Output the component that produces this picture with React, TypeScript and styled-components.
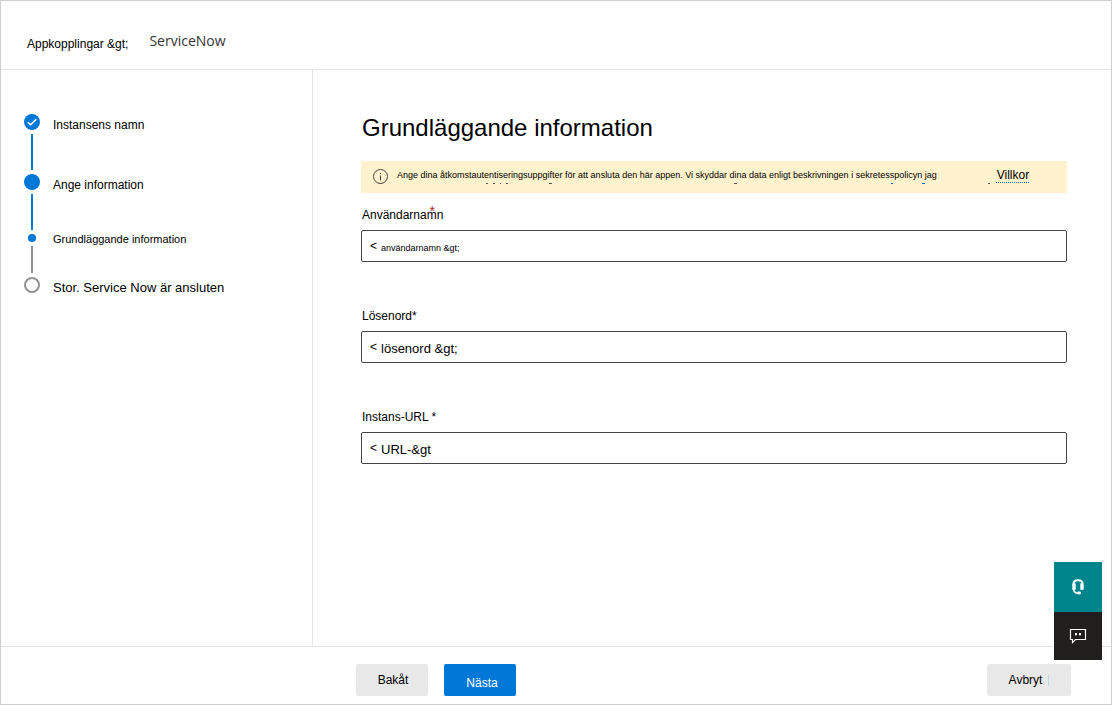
import React from "react";
import styled, { createGlobalStyle, css } from "styled-components";

const Global = createGlobalStyle`
  *, *::before, *::after { box-sizing: border-box; }
  body { margin: 0; background: #fff; color: #000; font: 12px/16px "Liberation Sans", Arial, sans-serif; }
  button, input { font: inherit; color: inherit; }
`;

const Page = styled.div`
  position: relative;
  min-height: 100vh;
  display: flex;
  flex-direction: column;
  border: 1px solid #cfcfcf;
`;

const Header = styled.header`
  border-bottom: 1px solid #e5e5e5;
  padding: 32px 26px 17px;
`;

const Breadcrumb = styled.nav`
  display: flex;
  align-items: flex-start;
  gap: 21px;
`;

const CrumbLink = styled.a`
  color: #000;
  text-decoration: none;
  padding-top: 3px;
`;

const Crumb = styled.span`
  color: #333;
  font: 14px/16px "Open Sans", "Noto Sans", sans-serif;
`;

const Body = styled.div`
  flex: 1;
  display: grid;
  grid-template-columns: 312px minmax(0, 1fr);
`;

const Sidebar = styled.aside`
  border-right: 1px solid #e5e5e5;
  padding: 44px 23px;
`;

const Steps = styled.ol`
  list-style: none;
  margin: 0;
  padding: 0;
`;

const Step = styled.li`
  display: grid;
  grid-template-columns: 16px 1fr;
  column-gap: 13px;
  justify-items: center;
`;

type MarkerKind = "done" | "current" | "dot" | "todo";

const Marker = styled.span<{ $kind: MarkerKind }>`
  display: flex;
  width: ${(p) => (p.$kind === "dot" ? 8 : 16)}px;
  height: ${(p) => (p.$kind === "dot" ? 8 : 16)}px;
  border-radius: 50%;
  ${(p) =>
    p.$kind === "todo"
      ? css`border: 2px solid #929292;`
      : css`background: #0078d7;`}
`;

const StepLabel = styled.span<{ $small?: boolean; $large?: boolean }>`
  justify-self: start;
  height: 0;
  line-height: ${(p) => (p.$small ? 10 : 22)}px;
  font-size: ${(p) => (p.$small ? 11 : p.$large ? 13 : 12)}px;
`;

const Connector = styled.span<{ $done: boolean; $short?: boolean }>`
  width: 2px;
  height: ${(p) => (p.$short ? 27 : 36)}px;
  margin: 4px 0;
  background: ${(p) => (p.$done ? "#0078d7" : "#929292")};
`;

const Main = styled.main`
  padding: 42px 44px 40px 48px;
`;

const Title = styled.h1`
  margin: 0 0 17px;
  padding-left: 1px;
  font-size: 24px;
  line-height: 32px;
  font-weight: 400;
`;

const Banner = styled.div`
  position: relative;
  display: flex;
  align-items: center;
  min-height: 32px;
  padding: 0 12px;
  margin-bottom: 14px;
  background: #fff2cc;
`;

const BannerText = styled.p`
  margin: 0 60px 4px 8px;
  font-size: 9px;
  line-height: 12px;
`;

const TermsLink = styled.a`
  color: #000;
  margin-bottom: 4px;
  text-decoration: underline dotted #0067b8 1px;
  text-underline-offset: 3px;
`;

const Remnants = styled.svg`
  position: absolute;
  left: 0;
  top: 0;
`;

const Field = styled.div`
  margin-bottom: 46px;
`;

const Label = styled.label`
  display: block;
  padding-left: 1px;
  margin-bottom: 7px;
`;

const RaisedStar = styled.span`
  position: absolute;
  margin: -4px 0 0 -14px;
  color: #a4262c;
  font-size: 14px;
`;

const InputBox = styled.div`
  display: flex;
  align-items: center;
  height: 32px;
  gap: 4px;
  padding: 0 8px;
  border: 1px solid #444;
  border-radius: 2px;
`;

const Input = styled.input<{ $size: number }>`
  flex: 1;
  min-width: 0;
  border: 0;
  outline: 0;
  padding: 3px 0 0;
  background: transparent;
  font-size: ${(p) => p.$size}px;
`;

const Footer = styled.footer`
  display: flex;
  gap: 16px;
  padding: 17px 40px 8px 355px;
  border-top: 1px solid #e5e5e5;
`;

const Button = styled.button<{ $primary?: boolean }>`
  min-width: 72px;
  height: 32px;
  border: 0;
  border-radius: 2px;
  padding: ${(p) => (p.$primary ? "5px 0 0 4px" : "0 0 0 2px")};
  background: ${(p) => (p.$primary ? "#0078d7" : "#e8e8e8")};
  color: ${(p) => (p.$primary ? "#fff" : "#000")};
`;

const CancelButton = styled(Button)`
  display: flex;
  align-items: center;
  justify-content: center;
  gap: 6px;
  min-width: 84px;
  padding: 0;
  margin-left: auto;

  &::after {
    content: "";
    width: 1px;
    height: 11px;
    background: #b5dde3;
  }
`;

const FloatingTools = styled.div`
  position: absolute;
  right: 9px;
  bottom: 44px;
  display: flex;
  flex-direction: column;
`;

const Tool = styled.button<{ $teal?: boolean }>`
  display: flex;
  align-items: center;
  justify-content: center;
  width: 48px;
  height: ${(p) => (p.$teal ? 50 : 48)}px;
  padding: 0;
  border: 0;
  background: ${(p) => (p.$teal ? "#00858c" : "#201f1e")};
`;

const steps: { label: string; kind: MarkerKind; line?: "full" | "short" }[] = [
  { label: "Instansens namn", kind: "done", line: "full" },
  { label: "Ange information", kind: "current", line: "full" },
  { label: "Grundläggande information", kind: "dot", line: "short" },
  { label: "Stor. Service Now är ansluten", kind: "todo" },
];

const fields = [
  { id: "user", label: "Användarnamn", star: "raised", value: "användarnamn &gt;", size: 9 },
  { id: "password", label: "Lösenord", star: "*", value: "lösenord &gt;", size: 13 },
  { id: "url", label: "Instans-URL", star: " *", value: "URL-&gt", size: 13 },
];

export default function App() {
  return (
    <Page>
      <Global />
      <Header>
        <Breadcrumb aria-label="Sökväg">
          <CrumbLink href="#">Appkopplingar &amp;gt;</CrumbLink>
          <Crumb>ServiceNow</Crumb>
        </Breadcrumb>
      </Header>
      <Body>
        <Sidebar>
          <Steps>
            {steps.map((s) => (
              <Step key={s.label}>
                <Marker $kind={s.kind}>
                  {s.kind === "done" && (
                    <svg width="16" height="16" viewBox="0 0 16 16" fill="none" stroke="#fff" strokeWidth="1.5">
                      <path d="M3.7 8.2l2.8 2.6 5.8-5.6" />
                    </svg>
                  )}
                </Marker>
                <StepLabel $small={s.kind === "dot"} $large={s.kind === "todo"}>
                  {s.label}
                </StepLabel>
                {s.line && <Connector $done={s.kind !== "dot"} $short={s.line === "short"} />}
              </Step>
            ))}
          </Steps>
        </Sidebar>
        <Main>
          <Title>Grundläggande information</Title>
          <Banner>
            <svg width="16" height="16" viewBox="0 0 16 16" fill="none" stroke="#444">
              <circle cx="7.5" cy="7.5" r="7" />
              <path d="M7.5 6.5v5M7.5 4v1.2" />
            </svg>
            <BannerText>
              Ange dina åtkomstautentiseringsuppgifter för att ansluta den här appen. Vi skyddar dina data enligt
              beskrivningen i sekretesspolicyn jag
            </BannerText>
            <TermsLink href="#">Villkor</TermsLink>
            <Remnants width="706" height="32" aria-hidden="true">
              <path d="M125 22.5h2M132 22.5h2M139 22.5h1M145 22.5h2M188 22.5h3M373 22.5h3M627 22.5h2" stroke="#555" />
              <path d="M530 22.5h2M561 22.5h3" stroke="#0067b8" />
            </Remnants>
          </Banner>
          {fields.map((f) => (
            <Field key={f.id}>
              <Label htmlFor={f.id}>
                {f.label}
                {f.star === "raised" ? <RaisedStar>*</RaisedStar> : f.star}
              </Label>
              <InputBox>
                <span>&lt;</span>
                <Input id={f.id} type="text" defaultValue={f.value} $size={f.size} />
              </InputBox>
            </Field>
          ))}
        </Main>
      </Body>
      <Footer>
        <Button type="button">Bakåt</Button>
        <Button type="button" $primary>Nästa</Button>
        <CancelButton type="button">Avbryt</CancelButton>
      </Footer>
      <FloatingTools>
        <Tool type="button" $teal aria-label="Support">
          <svg width="16" height="18" viewBox="0 0 16 18" fill="none" stroke="#fff">
            <path d="M3.4 11.5V6.5C3.4 3.6 5.3 2.2 8 2.2s4.6 1.4 4.6 4.3v5" strokeWidth="2" />
            <path d="M4.2 5.6v6.2M11.8 5.6v6.2" strokeWidth="3" />
            <path d="M3.6 11.4c.3 2.6 1.8 3.7 4.4 3.8" strokeWidth="1.6" />
            <rect x="7" y="13.4" width="4" height="3" rx="1.4" fill="#fff" stroke="none" />
          </svg>
        </Tool>
        <Tool type="button" aria-label="Feedback">
          <svg width="18" height="16" viewBox="0 0 18 16" fill="none" stroke="#fff">
            <path d="M1.5 1.5h15v10H6.5L3.5 14.5v-3h-2z" strokeWidth="1.2" />
            <path d="M6 5h2v2l-1.4 1V7H6zM10 5h2v2l-1.4 1V7H10z" fill="#fff" stroke="none" />
          </svg>
        </Tool>
      </FloatingTools>
    </Page>
  );
}
